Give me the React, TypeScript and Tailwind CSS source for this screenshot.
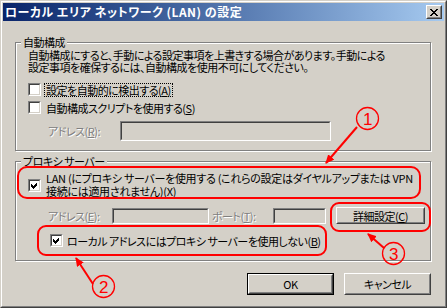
import React from 'react'

const face = 'bg-[#d4d0c8]'

function Check({ checked }: { checked?: boolean }) {
  return (
    <span className="block w-[13px] h-[13px] shrink-0 border border-t-[#808080] border-l-[#808080] border-r-white border-b-white">
      <span className="flex w-full h-full items-center justify-center bg-white border border-t-[#404040] border-l-[#404040] border-r-[#d4d0c8] border-b-[#d4d0c8]">
        {checked && (
          <svg width="7" height="7" viewBox="0 0 7 7" shapeRendering="crispEdges">
            <path d="M0 2 L2 4 L6 0 L6 3 L2 7 L0 5 Z" fill="#000" />
          </svg>
        )}
      </span>
    </span>
  )
}

function Group({ label, className, children }: { label: string; className: string; children: React.ReactNode }) {
  return (
    <div className={`relative border border-[#808080] shadow-[1px_1px_0_#fff,inset_1px_1px_0_#fff] ${className}`}>
      <span className={`absolute left-[5px] top-[-7px] px-[2px] leading-[12px] ${face}`}>{label}</span>
      {children}
    </div>
  )
}

const dim = 'text-[#808080] [text-shadow:1px_1px_0_#fff]'
const sunken = 'border border-t-[#808080] border-l-[#808080] border-r-white border-b-white'
const sunkenIn = 'block w-full h-full bg-[#d4d0c8] border border-t-[#404040] border-l-[#404040] border-r-[#d4d0c8] border-b-[#d4d0c8]'

function Field({ className }: { className: string }) {
  return (
    <span className={`block shrink-0 ${sunken} ${className}`}>
      <span className={sunkenIn} />
    </span>
  )
}

function Button({ label, isDefault, className }: { label: React.ReactNode; isDefault?: boolean; className: string }) {
  const inner = (
    <span className="flex w-full h-full border border-t-white border-l-white border-r-[#404040] border-b-[#404040]">
      <span className="flex w-full h-full items-center justify-center border border-t-[#d4d0c8] border-l-[#d4d0c8] border-r-[#808080] border-b-[#808080]">
        {label}
      </span>
    </span>
  )
  return (
    <div className={`shrink-0 ${isDefault ? 'border border-black' : ''} ${className}`}>{inner}</div>
  )
}

export default function App() {
  return (
    <div className="relative w-[447px] h-[308px] whitespace-nowrap font-['Noto_Sans_CJK_JP',sans-serif] text-[11px] leading-[12px] tracking-[-0.5px] text-black [font-feature-settings:'palt'] bg-[#d4d0c8] border border-t-[#d4d0c8] border-l-[#d4d0c8] border-r-[#404040] border-b-[#404040]">
      <div className="flex flex-col h-full border border-t-white border-l-white border-r-[#808080] border-b-[#808080] p-[1px]">
        {/* title bar */}
        <div className="flex items-center justify-between h-[18px] shrink-0 bg-gradient-to-r from-[#0a246a] to-[#a6caf0] pl-[2px] pr-[2px]">
          <span className="text-white font-bold text-[12px] tracking-[0.5px]">ローカル エリア ネットワーク (LAN) の設定</span>
          <span className="block w-[16px] h-[14px] border border-t-white border-l-white border-r-[#404040] border-b-[#404040]">
            <span className="flex w-full h-full items-center justify-center bg-[#d4d0c8] border border-t-[#d4d0c8] border-l-[#d4d0c8] border-r-[#808080] border-b-[#808080]">
              <svg width="8" height="7" viewBox="0 0 8 7" shapeRendering="crispEdges">
                <path d="M0 0h2l2 2.5L6 0h2L5 3.5 8 7H6L4 4.5 2 7H0l3-3.5z" fill="#000" />
              </svg>
            </span>
          </span>
        </div>

        <div className="flex flex-col px-[12px]">
          <Group label="自動構成" className="mt-[21px] w-[416px] h-[109px] pt-[6px] pl-[12px]">
            <p className="leading-[12px]">自動構成にすると、手動による設定事項を上書きする場合があります。手動による</p>
            <p className="leading-[12px]">設定事項を確保するには、自動構成を使用不可にしてください。</p>
            <div className="flex items-center mt-[10px] h-[13px]">
              <Check />
              <span className="ml-[3px] px-[1px] border border-dotted border-black leading-[12px]">
                設定を自動的に検出する(<u>A</u>)
              </span>
            </div>
            <div className="flex items-center mt-[5px] h-[13px]">
              <Check />
              <span className="ml-[5px]">自動構成スクリプトを使用する(<u>S</u>)</span>
            </div>
            <div className="flex items-center mt-[7px]">
              <span className={`ml-[20px] w-[72px] ${dim}`}>アドレス(<u>R</u>):</span>
              <Field className="w-[211px] h-[20px]" />
            </div>
          </Group>

          <Group label="プロキシ サーバー" className="mt-[10px] w-[416px] h-[100px] pt-[10px] pl-[12px]">
            <div className="flex items-center">
              <Check checked />
              <span className="ml-[5px] leading-[13px] tracking-[-0.3px]">
                LAN (にプロキシ サーバーを使用する (これらの設定はダイヤルアップまたは VPN
                <br />
                接続には適用されません)(<u>X</u>)
              </span>
            </div>
            <div className="flex items-center mt-[9px]">
              <span className={`ml-[20px] w-[64px] ${dim}`}>アドレス(<u>E</u>):</span>
              <Field className="w-[97px] h-[16px]" />
              <span className={`ml-[3px] w-[61px] ${dim}`}>ポート(<u>T</u>):</span>
              <Field className="w-[53px] h-[16px]" />
              <Button label={<span>詳細設定(<u>C</u>)</span>} className="ml-[10px] w-[89px] h-[17px]" />
            </div>
            <div className="flex items-center mt-[10px] pl-[22px]">
              <Check checked />
              <span className="ml-[4px]">ローカル アドレスにはプロキシ サーバーを使用しない(<u>B</u>)</span>
            </div>
          </Group>

          <div className="flex justify-end gap-[10px] mt-[12px] pr-[1px]">
            <Button label="OK" isDefault className="w-[87px] h-[22px]" />
            <Button label="キャンセル" className="w-[87px] h-[22px]" />
          </div>
        </div>
      </div>

      {/* annotations */}
      <svg className="absolute left-[-1px] top-[-1px] pointer-events-none" width="447" height="308" viewBox="0 0 447 308">
        <defs>
          <marker id="ah" markerWidth="9" markerHeight="8" refX="8" refY="4" orient="auto" markerUnits="userSpaceOnUse">
            <path d="M0,0 L9,4 L0,8 z" fill="#ff0000" />
          </marker>
        </defs>
        <g fill="none" stroke="#ff0000" strokeWidth="2">
          <rect x="18" y="167" width="402" height="31" rx="9" />
          <rect x="331" y="203" width="99" height="28" rx="8" />
          <rect x="38" y="226" width="288" height="29" rx="8" />
          <line x1="357" y1="127" x2="326" y2="163" markerEnd="url(#ah)" />
          <line x1="93" y1="284" x2="76" y2="258" markerEnd="url(#ah)" />
          <line x1="384" y1="248" x2="368" y2="234" markerEnd="url(#ah)" />
        </g>
        <g fill="none" stroke="#ff0000" strokeWidth="1.3">
          <circle cx="367.5" cy="118.5" r="11" />
          <circle cx="103.5" cy="286.5" r="11" />
          <circle cx="393.5" cy="253.5" r="11" />
        </g>
        <g fill="#ff0000" fontFamily="'Liberation Sans', sans-serif" fontSize="17" textAnchor="middle">
          <text x="367.5" y="124.5">1</text>
          <text x="103.5" y="292.5">2</text>
          <text x="393.5" y="259.5">3</text>
        </g>
      </svg>
    </div>
  )
}
